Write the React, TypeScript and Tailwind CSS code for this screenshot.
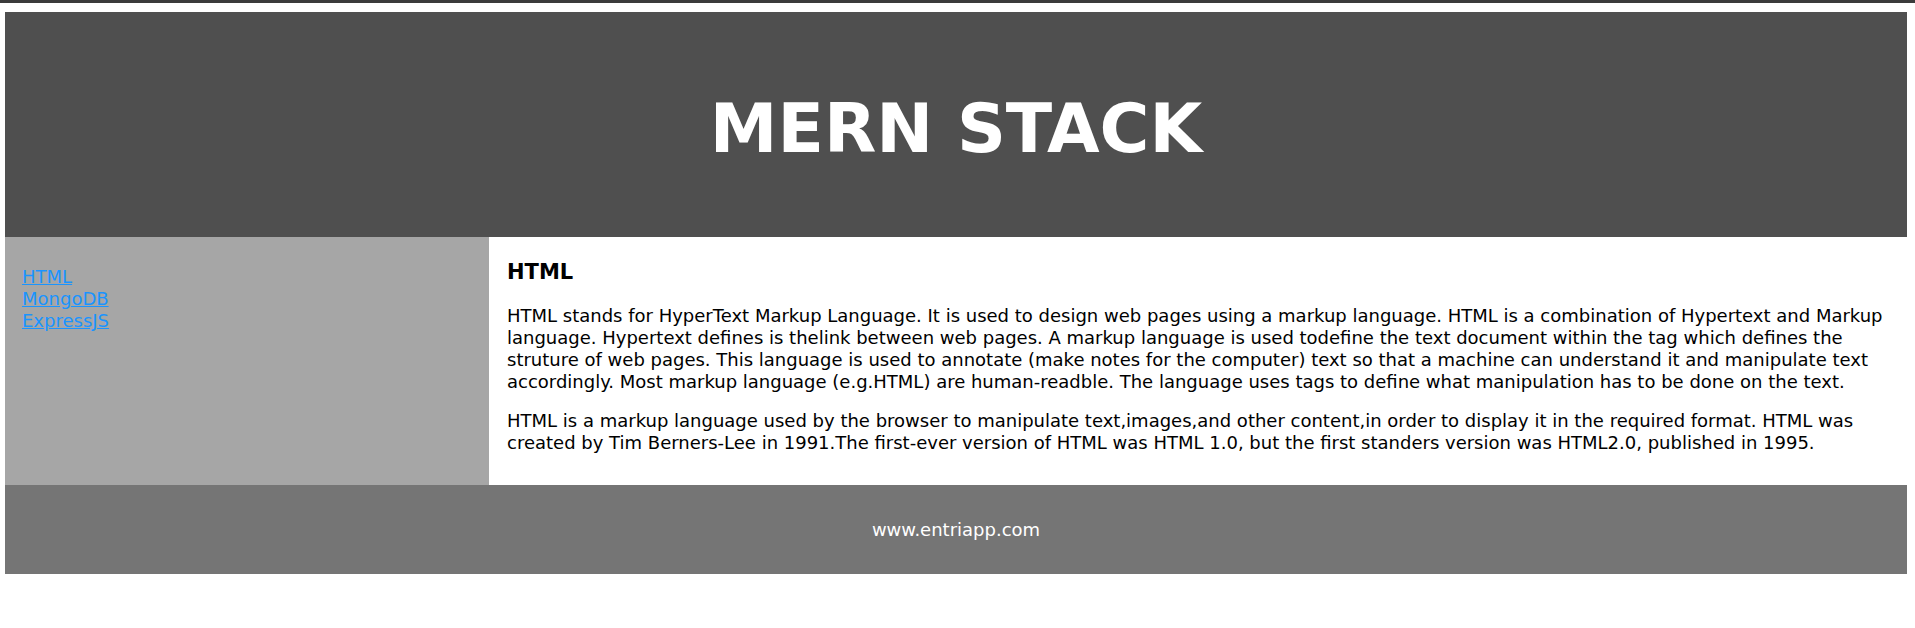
export default function App() {
  return (
    <div className="min-h-screen bg-white font-['DejaVu_Sans',sans-serif] text-black">
      {/* top strip */}
      <div className="h-[3px] bg-[#3b3b3b]"></div>

      <div className="ml-[5px] mr-[8px] mt-[9px]">
        {/* Header */}
        <header className="h-[225px] bg-[#4f4f4f] flex items-center justify-center pt-[8px]">
          <h1 className="font-bold text-[68px] leading-none text-white">MERN STACK</h1>
        </header>

        <div className="flex">
          {/* Sidebar */}
          <nav className="w-[484px] shrink-0 bg-[#a6a6a6] pt-[29px] pl-[17px]">
            <a href="#" className="block w-fit text-[18px] leading-[22px] text-[#1a94ff] underline">
              HTML
            </a>
            <a href="#" className="block w-fit text-[18px] leading-[22px] text-[#1a94ff] underline">
              MongoDB
            </a>
            <a href="#" className="block w-fit text-[18px] leading-[22px] text-[#1a94ff] underline">
              ExpressJS
            </a>
          </nav>

          {/* Content */}
          <main className="flex-1 bg-white pt-[23px] pl-[18px] pr-[12px] pb-[31px]">
            <h3 className="font-bold text-[21px] leading-[25px]">HTML</h3>
            <p className="mt-[20px] text-[18px] leading-[22px]">
              HTML stands for HyperText Markup Language. It is used to design web pages using a markup language. HTML is a combination of Hypertext and Markup language. Hypertext defines is thelink between web pages. A markup language is used todefine the text document within the tag which defines the struture of web pages. This language is used to annotate (make notes for the computer) text so that a machine can understand it and manipulate text accordingly. Most markup language (e.g.HTML) are human-readble. The language uses tags to define what manipulation has to be done on the text.
            </p>
            <p className="mt-[17px] text-[18px] leading-[22px]">
              HTML is a markup language used by the browser to manipulate text,images,and other content,in order to display it in the required format. HTML was created by Tim Berners-Lee in 1991.The first-ever version of HTML was HTML 1.0, but the first standers version was HTML2.0, published in 1995.
            </p>
          </main>
        </div>

        {/* Footer */}
        <footer className="h-[89px] bg-[#757575] flex items-center justify-center">
          <p className="text-white text-[18px]">www.entriapp.com</p>
        </footer>
      </div>
    </div>
  );
}
